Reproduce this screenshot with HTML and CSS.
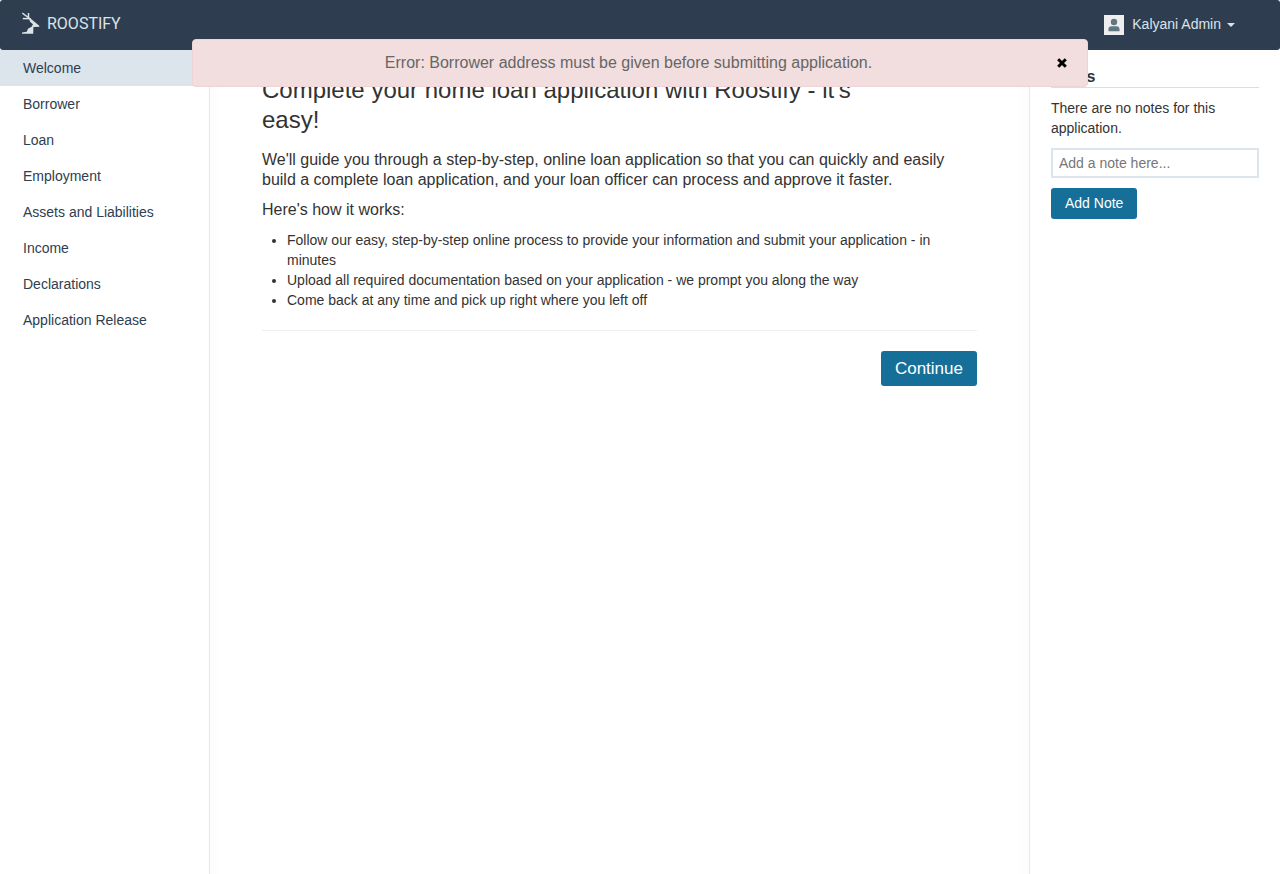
FILE: index.html
```html
<!DOCTYPE html>
<html lang="en">
<head>
<meta charset="utf-8">
<title>Roostify</title>
<link rel="stylesheet" href="styles.css">
</head>
<body>
<header class="navbar">
  <a class="brand" href="#">
    <svg class="brand-mark" viewBox="0 0 18 22" aria-hidden="true">
      <g fill="none" stroke="#dce3e9">
        <path d="M.3 1 8.6 7.2" stroke-width="1.4"/>
        <path d="M6.5 1V7" stroke-width="1.5"/>
        <path d="M.8 6.6H8.2" stroke-width="1.5"/>
        <path d="M7.8 6.8 16.8 14.2" stroke-width="1.4"/>
      </g>
      <path d="M7.2 6.4 17.8 14.8 11.4 14.9 11.2 21.7H0V20.6L4.8 19.8 6 16.8 9.6 14.8 11 12.2 8 9.8Z" fill="#dce3e9"/>
    </svg>
    <span class="brand-name">ROOSTIFY</span>
  </a>
  <button class="user-menu" type="button">
    <svg class="avatar" viewBox="0 0 20 20" aria-hidden="true">
      <rect width="20" height="20" fill="#eeeeee"/>
      <circle cx="10" cy="7" r="3.2" fill="#607781"/>
      <path d="M4.5 16.2V14.3Q4.5 11.3 7.6 11.2H12.4Q15.5 11.3 15.5 14.3V16.2Z" fill="#607781"/>
    </svg>
    <span class="user-name">Kalyani Admin</span>
    <span class="caret"></span>
  </button>
</header>
<div class="alert" role="alert">
  <span class="alert-text">Error: Borrower address must be given before submitting application.</span>
  <button class="alert-close" type="button" aria-label="Close">
    <svg viewBox="0 0 10 10" aria-hidden="true"><path d="M1.2 1.2 8.8 8.8M8.8 1.2 1.2 8.8" stroke="#000" stroke-width="3"/></svg>
  </button>
</div>
<div class="layout">
  <nav class="sidebar">
    <a class="nav-link active" href="#">Welcome</a>
    <a class="nav-link" href="#">Borrower</a>
    <a class="nav-link" href="#">Loan</a>
    <a class="nav-link" href="#">Employment</a>
    <a class="nav-link" href="#">Assets and Liabilities</a>
    <a class="nav-link" href="#">Income</a>
    <a class="nav-link" href="#">Declarations</a>
    <a class="nav-link" href="#">Application Release</a>
  </nav>
  <main class="content">
    <h1 class="title">Complete your home loan application with Roostify - it's easy!</h1>
    <p class="lead">We'll guide you through a step-by-step, online loan application so that you can quickly and easily build a complete loan application, and your loan officer can process and approve it faster.</p>
    <p class="lead">Here's how it works:</p>
    <ul class="steps">
      <li>Follow our easy, step-by-step online process to provide your information and submit your application - in minutes</li>
      <li>Upload all required documentation based on your application - we prompt you along the way</li>
      <li>Come back at any time and pick up right where you left off</li>
    </ul>
    <div class="actions">
      <button class="btn btn-large" type="button">Continue</button>
    </div>
  </main>
  <aside class="notes">
    <h2 class="notes-title">Notes</h2>
    <p class="notes-empty">There are no notes for this application.</p>
    <input class="note-input" type="text" placeholder="Add a note here..." aria-label="Add a note">
    <button class="btn" type="button">Add Note</button>
  </aside>
</div>
</body>
</html>
```
FILE: styles.css
```css
* {
  box-sizing: border-box;
}

body {
  margin: 0;
  min-height: 100vh;
  display: flex;
  flex-direction: column;
  background: #fff;
  color: #333;
  font: 14px/20px "Liberation Sans", Arial, sans-serif;
}

button,
input {
  font: inherit;
}

button {
  border: 0;
  cursor: pointer;
}

.navbar {
  display: flex;
  justify-content: space-between;
  align-items: center;
  height: 50px;
  padding: 0 45px 0 22px;
  background: #2e3e50;
  border-radius: 3px;
}

.brand {
  display: flex;
  align-items: center;
  gap: 7px;
  padding-bottom: 4px;
  color: #dce3e9;
  text-decoration: none;
}

.brand-mark {
  width: 18px;
  height: 22px;
}

.brand-name {
  padding-top: 2px;
  font: 16px/22px Roboto, "Liberation Sans", sans-serif;
}

.user-menu {
  display: flex;
  align-items: center;
  padding: 0;
  background: none;
  color: #dce3e9;
}

.user-name {
  padding-bottom: 2px;
}

.avatar {
  width: 20px;
  height: 20px;
  margin-right: 8px;
}

.caret {
  margin-left: 6px;
  border: 4px solid transparent;
  border-top-color: #dce3e9;
  border-bottom: 0;
}

.alert {
  position: absolute;
  top: 39px;
  left: 15%;
  width: 70%;
  display: flex;
  align-items: center;
  gap: 7px;
  padding: 13px 20px 13px 14px;
  border: 1px solid #eed3d7;
  border-radius: 4px;
  background: #f2dede;
  color: #666;
  font-size: 16px;
  text-align: center;
}

.alert-text {
  flex: 1;
}

.alert-close {
  display: flex;
  padding: 0;
  background: none;
}

.alert-close svg {
  width: 10px;
  height: 10px;
}

.layout {
  flex: 1;
  display: flex;
}

.sidebar {
  width: 209px;
}

.nav-link {
  display: block;
  padding: 8px 23px;
  color: #2e3e50;
  text-decoration: none;
}

.nav-link.active {
  background: #dce4ec;
}

.content {
  flex: 1;
  padding: 25px 52px;
  border: solid #e8e8e8;
  border-width: 0 1px;
  background: linear-gradient(to right, #fcfcfc, #fff 12px, #fff calc(100% - 12px), #fcfcfc);
}

.title {
  margin: 0 0 15px;
  padding-right: 100px;
  font-size: 24px;
  line-height: 30px;
  font-weight: normal;
}

.lead {
  margin: 0 0 10px;
  font-size: 16px;
}

.steps {
  margin: 0 0 20px;
  padding-left: 25px;
}

.actions {
  display: flex;
  justify-content: flex-end;
  padding-top: 20px;
  border-top: 1px solid #eee;
}

.btn {
  padding: 5px 14px 6px;
  border-radius: 3px;
  background: #166f98;
  color: #fff;
}

.btn-large {
  padding: 8px 14px 7px;
  font-size: 17px;
}

.notes {
  width: 250px;
  padding: 17px 21px;
}

.notes-title {
  margin: 0 0 10px;
  border-bottom: 1px solid #ddd;
  font-size: 16px;
  line-height: 20px;
}

.notes-empty {
  margin: 0 0 10px;
}

.note-input {
  display: block;
  width: 100%;
  height: 30px;
  margin-bottom: 10px;
  padding: 0 6px;
  border: 2px solid #dce4ec;
  background: #fff;
}

.note-input::placeholder {
  color: #777;
}
```
